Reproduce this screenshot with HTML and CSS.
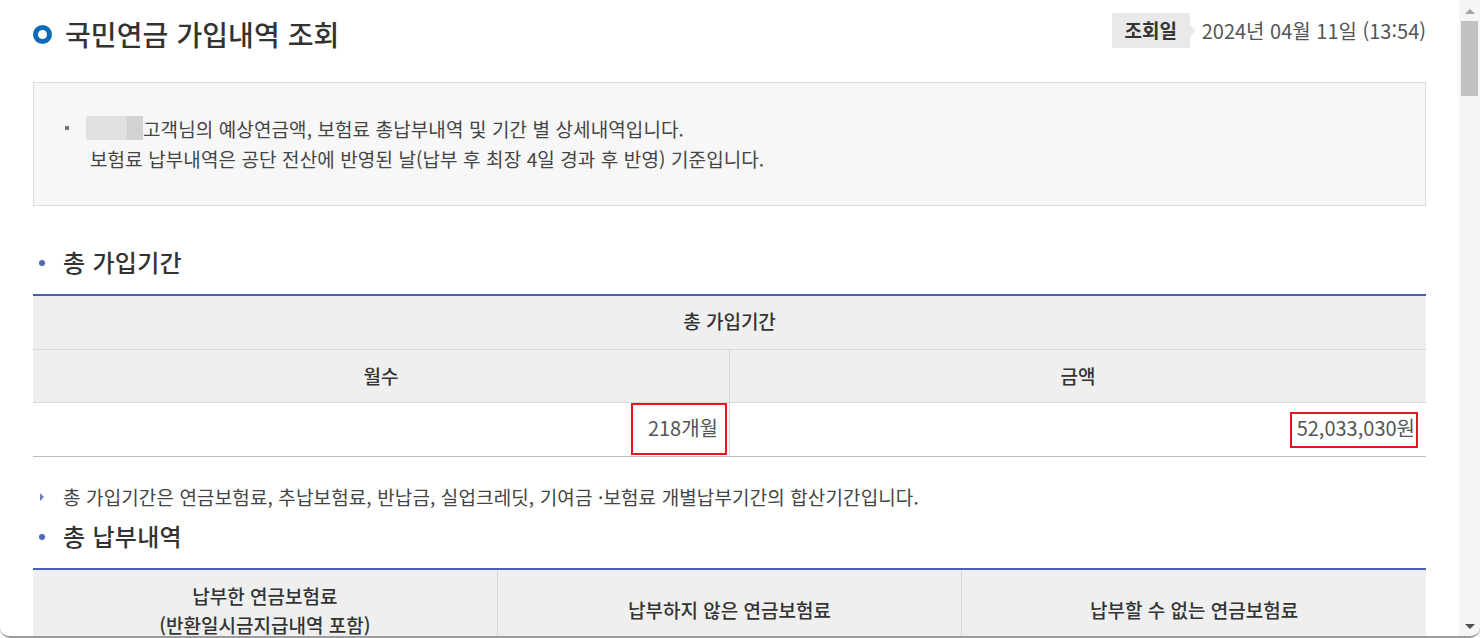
FILE: index.html
```html
<!DOCTYPE html>
<html lang="ko">
<head>
<meta charset="utf-8">
<title>국민연금 가입내역 조회</title>
<link rel="stylesheet" href="styles.css">
</head>
<body>
<div class="window">
  <main class="page">
    <header class="top">
      <h1 class="title"><span class="ring"></span>국민연금 가입내역 조회</h1>
      <div class="date"><span class="date-label">조회일</span><span class="date-value">2024년 04월 11일 (13:54)</span></div>
    </header>
    <section class="notice">
      <p class="notice-line"><span class="square"></span><span class="mask"></span>고객님의 예상연금액, 보험료 총납부내역 및 기간 별 상세내역입니다.</p>
      <p class="notice-line second">보험료 납부내역은 공단 전산에 반영된 날(납부 후 최장 4일 경과 후 반영) 기준입니다.</p>
    </section>
    <h2 class="heading first"><span class="dot"></span>총 가입기간</h2>
    <table class="grid">
      <colgroup><col class="half"><col class="half"></colgroup>
      <thead>
        <tr class="r1"><th colspan="2">총 가입기간</th></tr>
        <tr class="r2"><th>월수</th><th>금액</th></tr>
      </thead>
      <tbody>
        <tr class="r3"><td><span class="mark m1">218개월</span></td><td><span class="mark m2">52,033,030원</span></td></tr>
      </tbody>
    </table>
    <p class="note"><span class="tri"></span>총 가입기간은 연금보험료, 추납보험료, 반납금, 실업크레딧, 기여금 ·보험료 개별납부기간의 합산기간입니다.</p>
    <h2 class="heading second-h"><span class="dot"></span>총 납부내역</h2>
    <table class="grid three">
      <thead>
        <tr class="r4"><th>납부한 연금보험료<br>(반환일시금지급내역 포함)</th><th>납부하지 않은 연금보험료</th><th>납부할 수 없는 연금보험료</th></tr>
      </thead>
    </table>
  </main>
  <div class="scrollbar">
    <span class="arrow up"></span>
    <span class="thumb"></span>
    <span class="track"></span>
    <span class="arrow down"></span>
  </div>
  <div class="frame"></div>
</div>
</body>
</html>
```
FILE: styles.css
```css
* { box-sizing: border-box; }
html, body { margin: 0; padding: 0; height: 100%; overflow: hidden; background: #fff; }
body { font-family: "Noto Sans CJK KR", "Noto Sans", sans-serif; color: #333; }
.window { position: relative; display: flex; width: 1480px; height: 638px; overflow: hidden; background: #fff; }
.page { flex: 1; min-width: 0; height: 636px; overflow: hidden; padding: 0 33px 0 33px; }
.top { display: flex; justify-content: space-between; align-items: flex-start; height: 82px; }
.title { display: flex; align-items: center; margin: 14px 0 0; font-size: 28px; line-height: 41px; font-weight: 500; color: #333; letter-spacing: .1px; }
.ring { width: 19px; height: 19px; border: 5px solid #0a6cb8; border-radius: 50%; margin-right: 13px; background: #fff; }
.date { display: flex; align-items: center; margin-top: 13px; }
.date-label { position: relative; width: 78px; height: 35px; line-height: 33px; text-align: center; background: #e9e9e9; border-radius: 2px; font-size: 19px; font-weight: 700; color: #333; }
.date-label::after { content: ""; position: absolute; left: 100%; top: 12px; border: 6px solid transparent; border-left-color: #e9e9e9; }
.date-value { margin-left: 12px; font-size: 20px; line-height: 35px; color: #555; }
.notice { height: 124px; border: 1px solid #ddd; background: #f7f7f7; padding: 30px 0 0 52px; }
.notice-line { position: relative; display: flex; align-items: center; margin: 0; height: 30px; font-size: 19px; color: #444; letter-spacing: .1px; }
.notice-line.second { padding-left: 4px; }
.square { position: absolute; left: -21px; top: 13px; width: 4px; height: 4px; background: #777; }
.mask { width: 57px; height: 24px; background: linear-gradient(to right, #e0e0e0 41px, #d2d2d2 41px); }
.heading { position: relative; margin: 0; padding-left: 30px; font-size: 24px; font-weight: 500; line-height: 32px; color: #333; letter-spacing: .3px; }
.heading.first { margin-top: 40px; }
.heading.second-h { margin-top: 8px; }
.dot { position: absolute; left: 6px; top: 14px; width: 6px; height: 6px; border-radius: 50%; background: #4f68b5; }
.grid { width: 100%; table-layout: fixed; border-collapse: collapse; margin-top: 16px; border-top: 2px solid #4a60b0; font-size: 19px; }
.half { width: 50%; }
.grid th { background: #efefef; font-weight: 500; color: #333; border-left: 1px solid #d8d8d8; border-bottom: 1px solid #d8d8d8; text-align: center; padding: 0; }
.grid th:first-child { border-left: 0; }
.r1 th { height: 54px; padding-bottom: 3px; }
.r2 th { height: 53px; }
.r3 td { height: 54px; padding: 0 11px 2px 0; text-align: right; border-bottom: 1px solid #bbb; border-left: 1px solid #d8d8d8; font-size: 20px; color: #555; }
.r3 td:first-child { border-left: 0; }
.mark { position: relative; display: inline-block; line-height: 50px; }
.mark::after { content: ""; position: absolute; border: 2px solid #e8141e; }
.m1::after { left: -17px; right: -9px; top: 0; bottom: -2px; }
.m2::after { left: -7px; right: -3px; top: 9px; bottom: 5px; }
.note { position: relative; margin: 25px 0 0; padding-left: 30px; font-size: 19px; line-height: 30px; color: #444; letter-spacing: .12px; }
.tri { position: absolute; left: 7px; top: 11px; border: 4px solid transparent; border-left: 4px solid #6d7fbc; border-right: 0; }
.three { margin-top: 16px; }
.r4 th { height: 82px; line-height: 29px; }
.scrollbar { display: flex; flex-direction: column; align-items: stretch; width: 21px; height: 636px; background: #f5f5f5; padding: 0 2px; }
.arrow { height: 21px; position: relative; flex: none; }
.arrow::after { content: ""; position: absolute; left: 4px; border: 5px solid transparent; }
.arrow.up::after { top: 9px; border-bottom: 5px solid #a3a3a3; border-top: 0; }
.arrow.down::after { top: 9px; border-top: 5px solid #505050; border-bottom: 0; }
.thumb { height: 75px; background: #c1c1c1; flex: none; }
.track { flex: 1; }
.frame { position: absolute; inset: 0; border-bottom: 2px solid #9c9c9c; border-radius: 0 0 10px 10px; pointer-events: none; }
```
